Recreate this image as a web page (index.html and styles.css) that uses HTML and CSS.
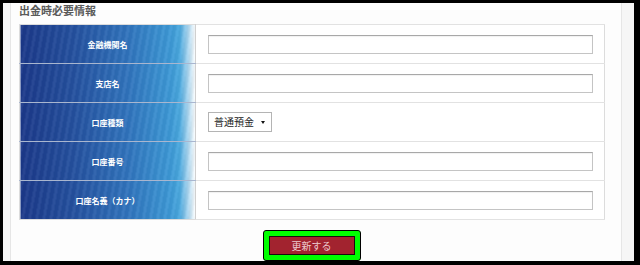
FILE: index.html
```html
<!DOCTYPE html>
<html lang="ja">
<head>
<meta charset="utf-8">
<title>出金時必要情報</title>
<link rel="stylesheet" href="styles.css">
</head>
<body>
<div class="screen">
  <div class="side side-left"></div>
  <div class="panel">
    <h2 class="heading">出金時必要情報</h2>
    <table class="form-table">
      <tr>
        <th>金融機関名</th>
        <td><input class="text-input" type="text"></td>
      </tr>
      <tr>
        <th>支店名</th>
        <td><input class="text-input" type="text"></td>
      </tr>
      <tr>
        <th>口座種類</th>
        <td>
          <div class="select">
            <span class="select-value">普通預金</span>
            <span class="select-arrow"></span>
          </div>
        </td>
      </tr>
      <tr>
        <th>口座番号</th>
        <td><input class="text-input" type="text"></td>
      </tr>
      <tr>
        <th>口座名義（カナ）</th>
        <td><input class="text-input" type="text"></td>
      </tr>
    </table>
    <div class="actions">
      <div class="highlight">
        <button class="submit" type="button">更新する</button>
      </div>
    </div>
  </div>
  <div class="side side-right"></div>
</div>
</body>
</html>
```

FILE: styles.css
```css
html, body {
  margin: 0;
  padding: 0;
  background: #000;
  width: 640px;
  height: 265px;
  overflow: hidden;
}

.screen {
  margin: 3px 6px 0 3px;
  height: 258px;
  background: #f6f6f6;
  display: flex;
  overflow: hidden;
  font-family: "Noto Sans CJK JP", "Noto Sans", sans-serif;
}

.side-left {
  width: 7px;
  flex: none;
}

.side-right {
  flex: 1;
}

.panel {
  width: 602px;
  flex: none;
  background: #fdfdfd;
  border-left: 1px solid #e6e6e6;
  border-right: 1px solid #e6e6e6;
  padding-left: 8px;
  box-sizing: content-box;
}

.heading {
  margin: 0 0 8px 0;
  padding-top: 1px;
  font-size: 11px;
  line-height: 12px;
  font-weight: bold;
  color: #5a5a5a;
}

.form-table {
  width: 586px;
  border-collapse: collapse;
  border: 1px solid #dcdcdc;
}

.form-table th {
  width: 175px;
  height: 38px;
  padding: 0;
  border-top: 1px solid #a9b6cf;
  border-bottom: 1px solid #a9b6cf;
  border-right: 1px solid #d0d0d0;
  color: #fff;
  font-size: 8px;
  font-weight: bold;
  text-align: center;
  background:
    repeating-linear-gradient(100deg, rgba(255,255,255,0.05) 0 3px, rgba(0,0,0,0.03) 3px 7px),
    linear-gradient(90deg, #1b3889 0%, #24509e 30%, #3074bd 62%, #3d99d6 86%, #4aa8de 91%, #d8ecf8 98%, #ffffff 100%);
}

.form-table tr:first-child th {
  border-top-color: #dcdcdc;
}

.form-table tr:last-child th {
  border-bottom-color: #dcdcdc;
}

.form-table td {
  height: 38px;
  padding: 0 0 0 12px;
  border-top: 1px solid #e2e2e2;
  border-bottom: 1px solid #e2e2e2;
  background: #fff;
}

.text-input {
  display: block;
  box-sizing: border-box;
  width: 385px;
  height: 19px;
  margin: 0;
  padding: 0 3px;
  border: 1px solid #c4c4c4;
  border-top-color: #a8a8a8;
  box-shadow: inset 0 1px 1px rgba(0,0,0,0.06);
  background: #fff;
}

.select {
  box-sizing: border-box;
  width: 64px;
  height: 20px;
  border: 1px solid #b4b4b4;
  background: #fff;
  display: flex;
  align-items: center;
  padding: 0 0 0 5px;
}

.select-value {
  font-size: 10px;
  color: #222;
  flex: 1;
  line-height: 18px;
}

.select-arrow {
  width: 0;
  height: 0;
  margin-right: 6px;
  border-left: 2.5px solid transparent;
  border-right: 2.5px solid transparent;
  border-top: 3.5px solid #111;
}

.actions {
  width: 586px;
  display: flex;
  justify-content: center;
  margin-top: 10px;
}

.highlight {
  margin-right: 1px;
  box-sizing: border-box;
  width: 98px;
  height: 31px;
  padding: 5px;
  background: #00ff00;
  border: 1px solid #000;
  border-radius: 3px;
}

.submit {
  display: block;
  box-sizing: border-box;
  width: 86px;
  height: 19px;
  margin: 0;
  padding: 0;
  border: 1px solid #1a0a0c;
  background: #a2232f;
  color: #ecc9ce;
  font-family: "Noto Sans CJK JP", "Noto Sans", sans-serif;
  font-size: 10px;
  line-height: 17px;
  text-align: center;
}
```
